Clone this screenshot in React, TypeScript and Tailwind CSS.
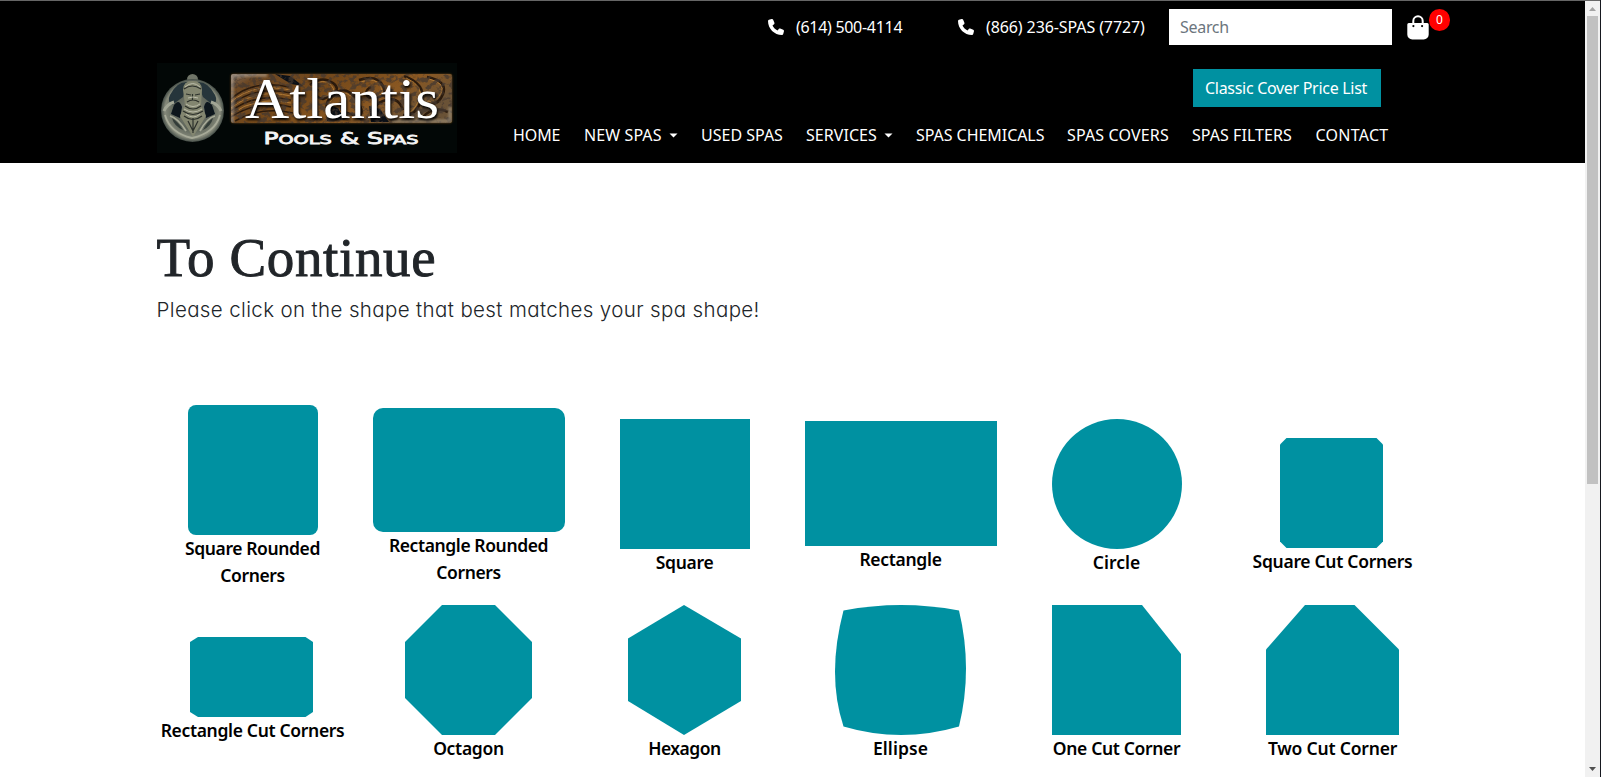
import React from "react";
import { FaPhone } from "react-icons/fa6";

const TEAL = "#0091a1";

function Logo() {
  return (
    <svg width="300" height="90" viewBox="0 0 300 90" className="block">
      <defs>
        <linearGradient id="wood" x1="0" y1="0" x2="1" y2="0.4">
          <stop offset="0" stopColor="#806f62" />
          <stop offset="0.12" stopColor="#6d4823" />
          <stop offset="0.45" stopColor="#75491a" />
          <stop offset="0.75" stopColor="#8a5822" />
          <stop offset="1" stopColor="#6a5236" />
        </linearGradient>
        <radialGradient id="metal" cx="0.5" cy="0.5" r="0.5">
          <stop offset="0" stopColor="#85877a" />
          <stop offset="0.6" stopColor="#5d6459" />
          <stop offset="0.88" stopColor="#85897a" />
          <stop offset="1" stopColor="#434c46" />
        </radialGradient>
        <filter id="grain" x="0" y="0" width="1" height="1">
          <feTurbulence type="fractalNoise" baseFrequency="0.16 0.2" numOctaves="3" seed="8" />
          <feColorMatrix values="0 0 0 0 0.06  0 0 0 0 0.04  0 0 0 0 0.03  6 0 0 0 -2.8" />
        </filter>
        <filter id="soft" x="-0.1" y="-0.1" width="1.2" height="1.2">
          <feGaussianBlur stdDeviation="1" />
        </filter>
        <filter id="fine">
          <feGaussianBlur stdDeviation="0.45" />
        </filter>
        <clipPath id="panel">
          <rect x="74" y="11" width="221" height="49" rx="2" />
        </clipPath>
      </defs>
      <rect width="300" height="90" fill="#020706" />

      <g filter="url(#fine)">
        <circle cx="35.500" cy="16.500" r="5.500" fill="#6f7467" />
        <circle cx="35.500" cy="47.500" r="31.500" fill="url(#metal)" />
        <path d="M13 32Q20 18 31 19L26 34L15 42Q10 38 13 32ZM58 32Q51 18 40 19L46 34L56 42Q61 38 58 32Z" fill="#26353a" />
        <path d="M17 42Q22 35 25 44L23 55L14 51ZM55 42Q49 35 47 44L49 55L58 51Z" fill="#09151f" />
        <path d="M26 27Q26 18 35.500 18T45 27L44 42L49 53L36 74L23 53L28 42Z" fill="#83866f" />
        <path d="M27 26Q35 20 44 26M29 31L34 32M38 32L43 31M35.500 31V37M30 39Q36 35 42 39M28 43Q36 49 44 43M26 48Q36 55 46 48M27 53Q36 60 45 53M31 58L36 68L41 58M36 55V70" fill="none" stroke="#2c302b" strokeWidth="1.200" />
        <path d="M28 24Q36 17 43 24M29 41Q36 46 43 41M27 46Q36 52 45 46M31 35Q36 33 41 35M29 51Q36 57 43 51" fill="none" stroke="#bbbcaa" strokeWidth="1" />
        <path d="M8 52Q13 70 35 75Q58 70 63 52M13 53Q21 55 29 68M58 53Q50 55 43 68" fill="none" stroke="#a7aa98" strokeWidth="1.800" />
        <path d="M15 55Q21 59 26 67Q17 63 15 55ZM56 55Q50 59 46 67Q54 63 56 55Z" fill="#333c38" />
        <path d="M7 48Q10 41 17 39M64 48Q61 41 54 39" fill="none" stroke="#a2a695" strokeWidth="3" />
      </g>

      <rect x="74" y="11" width="221" height="49" rx="3" fill="#6a4216" filter="url(#soft)" />
      <g clipPath="url(#panel)">
        <rect x="74" y="11" width="221" height="49" fill="url(#wood)" />
        <g fill="none" stroke="#2b1a0c" strokeWidth="1.500">
          <path d="M74 36Q96 16 132 24M74 42Q98 22 134 30M74 48Q100 29 134 37M74 54Q102 36 134 44M78 58Q104 43 136 50" />
          <path d="M153 22Q165 12 176 20T166 36Q156 34 161 26M178 55Q162 44 176 32T201 39T190 50Q181 48 186 41M202 17Q220 11 226 23T212 35Q206 28 214 24M223 57Q211 44 226 38T246 47M247 13Q270 22 264 38T246 52M270 14Q291 18 286 31T269 40M265 55Q276 42 291 49" strokeWidth="2.500" />
        </g>
        <g fill="none" stroke="#b07a36" strokeWidth="1">
          <path d="M74 39Q97 19 133 27M74 45Q99 25 134 33M74 51Q101 32 134 40M155 24Q166 14 174 22T166 34M180 53Q165 44 178 34T199 40M204 19Q219 13 224 24T213 33M249 15Q268 23 262 37T248 50M272 16Q289 20 284 30T270 38" />
        </g>
        <path d="M118 11L133 13L146 23L134 21ZM171 42L181 45L188 57L170 58ZM212 43L223 46L232 59L214 59Z" fill="#0b1017" />
        <rect x="74" y="11" width="221" height="49" filter="url(#grain)" opacity="0.75" />
        <path d="M75 60V13Q90 11 110 12" fill="none" stroke="#c6bcae" strokeWidth="4" opacity="0.45" filter="url(#soft)" />
        <path d="M235 58H293V44" fill="none" stroke="#b9b09c" strokeWidth="3" opacity="0.5" filter="url(#soft)" />
      </g>

      <text x="88" y="55" textLength="194" lengthAdjust="spacingAndGlyphs" fontSize="56" fill="#fff" className="font-['Liberation_Serif',serif] drop-shadow-[1px_2px_1px_#000]">Atlantis</text>
      <text x="106.500" y="80.500" textLength="155" lengthAdjust="spacingAndGlyphs" fontSize="16.500" fill="#f4f4f4" stroke="#f4f4f4" strokeWidth="0.800" className="font-['DejaVu_Sans',sans-serif]">
        P<tspan fontSize="12.800">OOLS</tspan> &amp; S<tspan fontSize="12.800">PAS</tspan>
      </text>
    </svg>
  );
}

function BagIcon() {
  return (
    <svg width="22" height="25" viewBox="0 0 22 25" className="block">
      <path d="M6.300 9V6a4.700 4.700 0 0 1 9.400 0V9" fill="none" stroke="#fff" strokeWidth="2" />
      <path fillRule="evenodd" fill="#fff" d="M1.800 8H20.200Q21.700 8 21.700 9.500V19.500A5 5 0 0 1 16.700 24.500H5.300A5 5 0 0 1 .3 19.500V9.500Q.3 8 1.800 8ZM6.400 10a1.100 1.100 0 1 0 0 2.200a1.100 1.100 0 0 0 0-2.200ZM15.100 10a1.100 1.100 0 1 0 0 2.200a1.100 1.100 0 0 0 0-2.200Z" />
    </svg>
  );
}

const nav = [
  { label: "HOME", box: "w-[71px] tracking-[-0.1px]" },
  { label: "NEW SPAS", box: "w-[117px] tracking-[0.1px]", menu: true },
  { label: "USED SPAS", box: "w-[105px] tracking-[0px]" },
  { label: "SERVICES", box: "w-[110px] tracking-[0.05px]", menu: true },
  { label: "SPAS CHEMICALS", box: "w-[151px] tracking-[-0.05px]" },
  { label: "SPAS COVERS", box: "w-[125px] tracking-[0.15px]" },
  { label: "SPAS FILTERS", box: "w-[123.500px] tracking-[0.05px]" },
  { label: "CONTACT", box: "w-[74px] tracking-[0.25px]" },
];

type Shape = { label: React.ReactNode; w: number; h: number; top: string; track: string; nudge?: boolean; art: React.ReactNode };

const shapes: Shape[] = [
  { label: <>Square Rounded<br />Corners</>, w: 130, h: 130, top: "pt-0", track: "tracking-[-0.4px]", art: <rect width="130" height="130" rx="8" /> },
  { label: <>Rectangle Rounded<br />Corners</>, w: 192, h: 124, top: "pt-[3px]", track: "tracking-[-0.4px]", art: <rect width="192" height="124" rx="10" /> },
  { label: "Square", w: 130, h: 130, top: "pt-[14px]", track: "tracking-[-0.3px]", art: <rect width="130" height="130" /> },
  { label: "Rectangle", w: 192, h: 125, top: "pt-4", track: "tracking-[-0.3px]", art: <rect width="192" height="125" /> },
  { label: "Circle", w: 130, h: 130, top: "pt-[14px]", track: "tracking-[0px]", art: <circle cx="65" cy="65" r="65" /> },
  { label: "Square Cut Corners", w: 103, h: 110, top: "pt-[33px]", track: "tracking-[-0.3px]", nudge: true, art: <path d="M6.500 0H96.500L103 6.500V103.500L96.500 110H6.500L0 103.500V6.500Z" /> },
  { label: "Rectangle Cut Corners", w: 123, h: 80, top: "pt-8", track: "tracking-[-0.330px]", nudge: true, art: <path d="M8 0H115.500L123 5V75L115.500 80H8L0 75V5Z" /> },
  { label: "Octagon", w: 127, h: 130, top: "pt-0", track: "tracking-[-0.3px]", art: <path d="M37 0H90L127 37V93L90 130H37L0 93V37Z" /> },
  { label: "Hexagon", w: 113, h: 130, top: "pt-0", track: "tracking-[-0.5px]", art: <path d="M56 0L113 33.500V96L56 130L0 96V33.500Z" /> },
  { label: "Ellipse", w: 131, h: 130, top: "pt-0", track: "tracking-[0.1px]", art: <path d="M8.500 5.500Q66 -5.500 124 5.500Q138 64 124 121.500Q66 138.500 8.500 121.500Q-8.500 70 8.500 5.500Z" /> },
  { label: "One Cut Corner", w: 129, h: 130, top: "pt-0", track: "tracking-[-0.350px]", art: <path d="M0 0H90L129 49V130H0Z" /> },
  { label: "Two Cut Corner", w: 133, h: 130, top: "pt-0", track: "tracking-[-0.2px]", art: <path d="M39 0H88.500L133 44.500V130H0V44.500Z" /> },
];

function Header() {
  return (
    <header className="flex h-[163px] border-t border-[#666] bg-black text-white">
      <div className="w-[300px] shrink-0 ml-[157px] pt-[62px]">
        <Logo />
      </div>
      <div className="ml-[56px] flex w-[940px] shrink-0 flex-col">
        <div className="flex h-[52px] items-center pl-[255px] whitespace-nowrap">
          <a className="flex w-[190px] items-center gap-3 tracking-[-0.3px]">
            <FaPhone size={16} />
            <span>(614) 500-4114</span>
          </a>
          <a className="flex w-[211px] items-center gap-3 tracking-[-0.1px]">
            <FaPhone size={16} />
            <span>(866) 236-SPAS (7727)</span>
          </a>
          <div className="flex h-9 w-[223px] shrink-0 items-center bg-white pl-[11px] text-[#6c757d] tracking-[-0.3px]">
            Search
          </div>
          <div className="ml-[15px] flex">
            <BagIcon />
            <span className="-mt-1.5 flex h-[22px] w-[21px] items-center justify-center rounded-full bg-[#f00] text-xs">0</span>
          </div>
        </div>
        <div className="flex h-[69px] pt-4 pl-[680px]">
          <button className="h-[38px] w-[188px] bg-[#0091a1] pr-0.5 whitespace-nowrap tracking-[-0.3px]">
            Classic Cover Price List
          </button>
        </div>
        <nav className="flex h-[26px] items-center whitespace-nowrap">
          {nav.map((n) => (
            <a key={n.label} className={`flex shrink-0 items-center ${n.box}`}>
              {n.label}
              {n.menu && (
                <svg width="9" height="5" viewBox="0 0 9 5" className="ml-[7px]">
                  <path d="M0.500 0.500H8.500L4.500 4.500Z" fill="#fff" />
                </svg>
              )}
            </a>
          ))}
        </nav>
      </div>
    </header>
  );
}

export default function App() {
  return (
    <div className="flex h-[777px] w-[1601px] overflow-hidden bg-white font-['Noto_Sans',sans-serif] text-base text-[#212529]">
      <div className="w-[1585px] shrink-0">
        <Header />
        <main className="px-[144.500px]">
          <section className="h-[242px] pt-[61px] pl-3">
            <h1 className="h-[68px] font-['Liberation_Serif',serif] text-[55px] leading-[68px] tracking-[0.650px] [-webkit-text-stroke:0.9px_#212529]">
              To Continue
            </h1>
            <p className="mt-[3px] font-['Inter',sans-serif] text-[20.500px] leading-[30px] font-light tracking-[0.370px] [font-feature-settings:'cv11']">
              Please click on the shape that best matches your spa shape!
            </p>
          </section>
          <section className="grid grid-cols-6">
            {shapes.map((s, i) => (
              <a key={i} className={`flex h-[200px] flex-col items-center text-center ${s.top}`}>
                <svg
                  width={s.w}
                  height={s.h}
                  viewBox={`0 0 ${s.w} ${s.h}`}
                  fill={TEAL}
                  className={s.nudge ? "mr-0.5 block shrink-0" : "block shrink-0"}
                >
                  {s.art}
                </svg>
                <span className={`text-[17.500px] leading-[27px] font-semibold whitespace-nowrap text-black ${s.track}`}>
                  {s.label}
                </span>
              </a>
            ))}
          </section>
        </main>
      </div>
      <div className="flex w-[15px] shrink-0 flex-col items-center border-t border-[#666] bg-[#f1f1f1]">
        <svg width="15" height="15" viewBox="0 0 15 15" className="shrink-0">
          <path d="M4 10H11L7.500 6Z" fill="#a3a3a3" />
        </svg>
        <div className="h-[468px] w-[11px] shrink-0 bg-[#c1c1c1]" />
        <svg width="15" height="15" viewBox="0 0 15 15" className="mt-auto shrink-0">
          <path d="M4 5H11L7.500 9Z" fill="#505050" />
        </svg>
      </div>
      <div className="w-px shrink-0 bg-[#16181f]" />
    </div>
  );
}
